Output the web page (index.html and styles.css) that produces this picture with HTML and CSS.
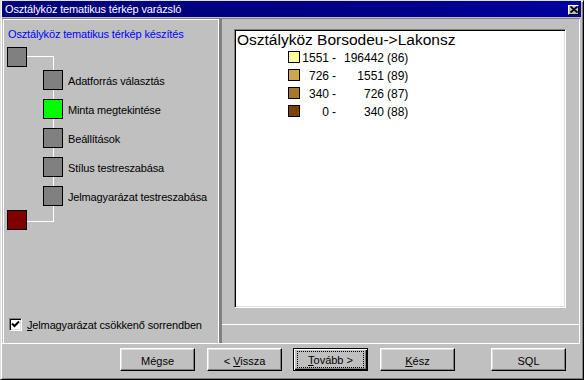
FILE: index.html
```html
<!DOCTYPE html>
<html>
<head>
<meta charset="utf-8">
<link rel="stylesheet" href="styles.css">
</head>
<body>
<div class="window">
  <div class="titlebar">
    <span class="title">Osztályköz tematikus térkép varázsló</span>
    <span class="close"><svg width="8" height="7" viewBox="0 0 8 7"><path d="M0.5 0.5L7.5 6.5M7.5 0.5L0.5 6.5" stroke="#000" stroke-width="1.8" fill="none"/></svg></span>
  </div>
  <div class="main">
    <div class="left">
      <div class="heading">Osztályköz tematikus térkép készítés</div>
      <div class="tree">
        <div class="sq gray"></div>
        <div class="steps">
          <div class="step"><div class="sq gray"></div><span>Adatforrás választás</span></div>
          <div class="step"><div class="sq green"></div><span>Minta megtekintése</span></div>
          <div class="step"><div class="sq gray"></div><span>Beállítások</span></div>
          <div class="step"><div class="sq gray"></div><span>Stílus testreszabása</span></div>
          <div class="step"><div class="sq gray"></div><span>Jelmagyarázat testreszabása</span></div>
        </div>
        <div class="sq red end"></div>
      </div>
      <div class="check">
        <span class="cb"><svg width="9" height="9" viewBox="0 0 9 9"><path d="M1 3.5L3.5 6L8 1.5" stroke="#000" stroke-width="2" fill="none"/></svg></span>
        <span><u>J</u>elmagyarázat csökkenő sorrendben</span>
      </div>
    </div>
    <div class="divider"></div>
    <div class="right">
      <div class="preview">
        <div class="ptitle">Osztályköz Borsodeu-&gt;Lakonsz</div>
        <div class="legend">
          <div class="lrow"><span class="sw sw1"></span><span class="c1">1551</span><span class="dash">-</span><span class="c2">196442</span><span class="cnt">(86)</span></div>
          <div class="lrow"><span class="sw sw2"></span><span class="c1">726</span><span class="dash">-</span><span class="c2">1551</span><span class="cnt">(89)</span></div>
          <div class="lrow"><span class="sw sw3"></span><span class="c1">340</span><span class="dash">-</span><span class="c2">726</span><span class="cnt">(87)</span></div>
          <div class="lrow"><span class="sw sw4"></span><span class="c1">0</span><span class="dash">-</span><span class="c2">340</span><span class="cnt">(88)</span></div>
        </div>
      </div>
      <div class="sep"></div>
    </div>
  </div>
  <div class="buttons">
    <div class="btn b-megse"><span>Mégse</span></div>
    <div class="btn b-vissza"><span>&lt; <u>V</u>issza</span></div>
    <div class="btn b-tovabb default"><span class="focus"><span><u>T</u>ovább &gt;</span></span></div>
    <div class="btn b-kesz"><span><u>K</u>ész</span></div>
    <div class="btn b-sql"><span>SQL</span></div>
  </div>
</div>
</body>
</html>
```
FILE: styles.css
```css
html, body {
  margin: 0;
  padding: 0;
  background: #c0c0c0;
}
body {
  font-family: "Liberation Sans", Arial, sans-serif;
  font-size: 11px;
  color: #000;
}
.window {
  width: 584px;
  height: 380px;
  box-sizing: border-box;
  background: #c0c0c0;
  border: 1px solid;
  border-color: #dfdfdf #000 #000 #dfdfdf;
  box-shadow: inset 1px 1px #fff, inset -1px -1px #808080;
  padding: 0 3px 0 1px;
  display: flex;
  flex-direction: column;
}
.titlebar {
  height: 16px;
  margin-right: -1px;
  background: linear-gradient(to right, #000078, #00008a 70%, #0000a0);
  color: #fff;
  display: flex;
  align-items: center;
  justify-content: space-between;
  padding: 0 2px 0 3px;
}
.title {
  line-height: 16px;
  letter-spacing: -0.15px;
}
.close {
  width: 11px;
  height: 10px;
  box-sizing: border-box;
  background: #c0c0c0;
  border: 1px solid;
  border-color: #fff #000 #000 #fff;
  display: flex;
  align-items: center;
  justify-content: center;
  margin-top: 1px;
}
.close svg { display: block; }
.main {
  margin-top: 1px;
  border-top: 1px solid #808080;
  border-bottom: 1px solid #fff;
  height: 324px;
  display: flex;
}
.left {
  margin-left: 1px;
  width: 216px;
  box-sizing: border-box;
  border-top: 1px solid #fff;
  border-left: 1px solid #fff;
  border-right: 1px solid #fff;
  padding: 8px 0 12px 3px;
  display: flex;
  flex-direction: column;
}
.heading {
  color: #0000ff;
  line-height: 13px;
  margin-left: 1px;
  letter-spacing: -0.15px;
}
.tree {
  position: relative;
  margin-top: 6px;
}
.tree::before {
  content: "";
  position: absolute;
  left: 20px;
  top: 9px;
  width: 26px;
  height: 164px;
  border-top: 1px solid #fff;
  border-right: 1px solid #fff;
  border-bottom: 1px solid #fff;
}
.sq {
  position: relative;
  width: 20px;
  height: 20px;
  box-sizing: border-box;
  border: 1px solid #000;
  flex: none;
}
.gray { background: #808080; }
.green { background: #00ff00; }
.red { background: #800000; }
.steps {
  margin: 3px 0 0 36px;
  display: flex;
  flex-direction: column;
  gap: 9px;
}
.step {
  display: flex;
  align-items: center;
  gap: 5px;
  line-height: 13px;
  letter-spacing: -0.15px;
}
.step span { padding-top: 2px; }
.end { margin-top: 4px; }
.check {
  margin-top: auto;
  margin-left: 2px;
  display: flex;
  align-items: center;
  gap: 5px;
  letter-spacing: -0.15px;
}
.cb {
  width: 13px;
  height: 13px;
  box-sizing: border-box;
  background: #fff;
  border: 1px solid;
  border-color: #808080 #fff #fff #808080;
  box-shadow: inset 1px 1px #000, inset -1px -1px #dfdfdf;
  display: flex;
  align-items: center;
  justify-content: center;
}
.cb svg { display: block; }
.divider {
  width: 3px;
  background: #808080;
}
.right {
  width: 358px;
  box-sizing: border-box;
  border-right: 1px solid #fff;
  display: flex;
  flex-direction: column;
}
.preview {
  margin: 10px 0 0 12px;
  width: 332px;
  height: 279px;
  box-sizing: border-box;
  background: #fff;
  border: 1px solid;
  border-color: #808080 #fff #fff #808080;
  box-shadow: inset 1px 1px #000, inset -1px -1px #dfdfdf;
  padding: 1px 2px 0 2px;
}
.ptitle {
  font-size: 15.5px;
  line-height: 18px;
}
.legend {
  display: flex;
  flex-direction: column;
  font-size: 12px;
}
.lrow {
  height: 18px;
  display: flex;
  align-items: center;
  padding-left: 51px;
}
.sw {
  width: 12px;
  height: 12px;
  box-sizing: border-box;
  border: 1px solid #000;
  margin-right: 2px;
  margin-top: -2px;
}
.sw1 { background: #ffff99; }
.sw2 { background: #cca84a; }
.sw3 { background: #a87828; }
.sw4 { background: #804000; }
.c1 { width: 27px; text-align: right; }
.dash { margin-left: 3px; width: 5px; }
.c2 { width: 47px; text-align: right; }
.cnt { margin-left: 3px; }
.sep {
  margin-top: 16px;
  height: 1px;
  background: #fff;
}
.buttons {
  display: flex;
  padding-left: 118px;
  margin-top: 4px;
}
.btn {
  width: 75px;
  height: 23px;
  box-sizing: border-box;
  background: #c0c0c0;
  border: 1px solid;
  border-color: #fff #000 #000 #fff;
  box-shadow: inset -1px -1px #808080, inset 1px 1px #dfdfdf;
  display: flex;
  align-items: center;
  justify-content: center;
  padding-top: 2px;
  white-space: pre;
}
.b-vissza { margin-left: 12px; }
.b-tovabb { margin-left: 11px; }
.b-kesz { margin-left: 12px; }
.b-sql { margin-left: 36px; }
.default {
  border: 1px solid #000;
  box-shadow: inset 1px 1px #fff, inset -1px -1px #000, inset -2px -2px #808080;
  padding: 3px 4px 3px 4px;
}
.focus {
  flex: 1;
  align-self: stretch;
  display: flex;
  align-items: center;
  justify-content: center;
  outline: 1px dotted #000;
  outline-offset: 0;
  padding-top: 1px;
}
```
